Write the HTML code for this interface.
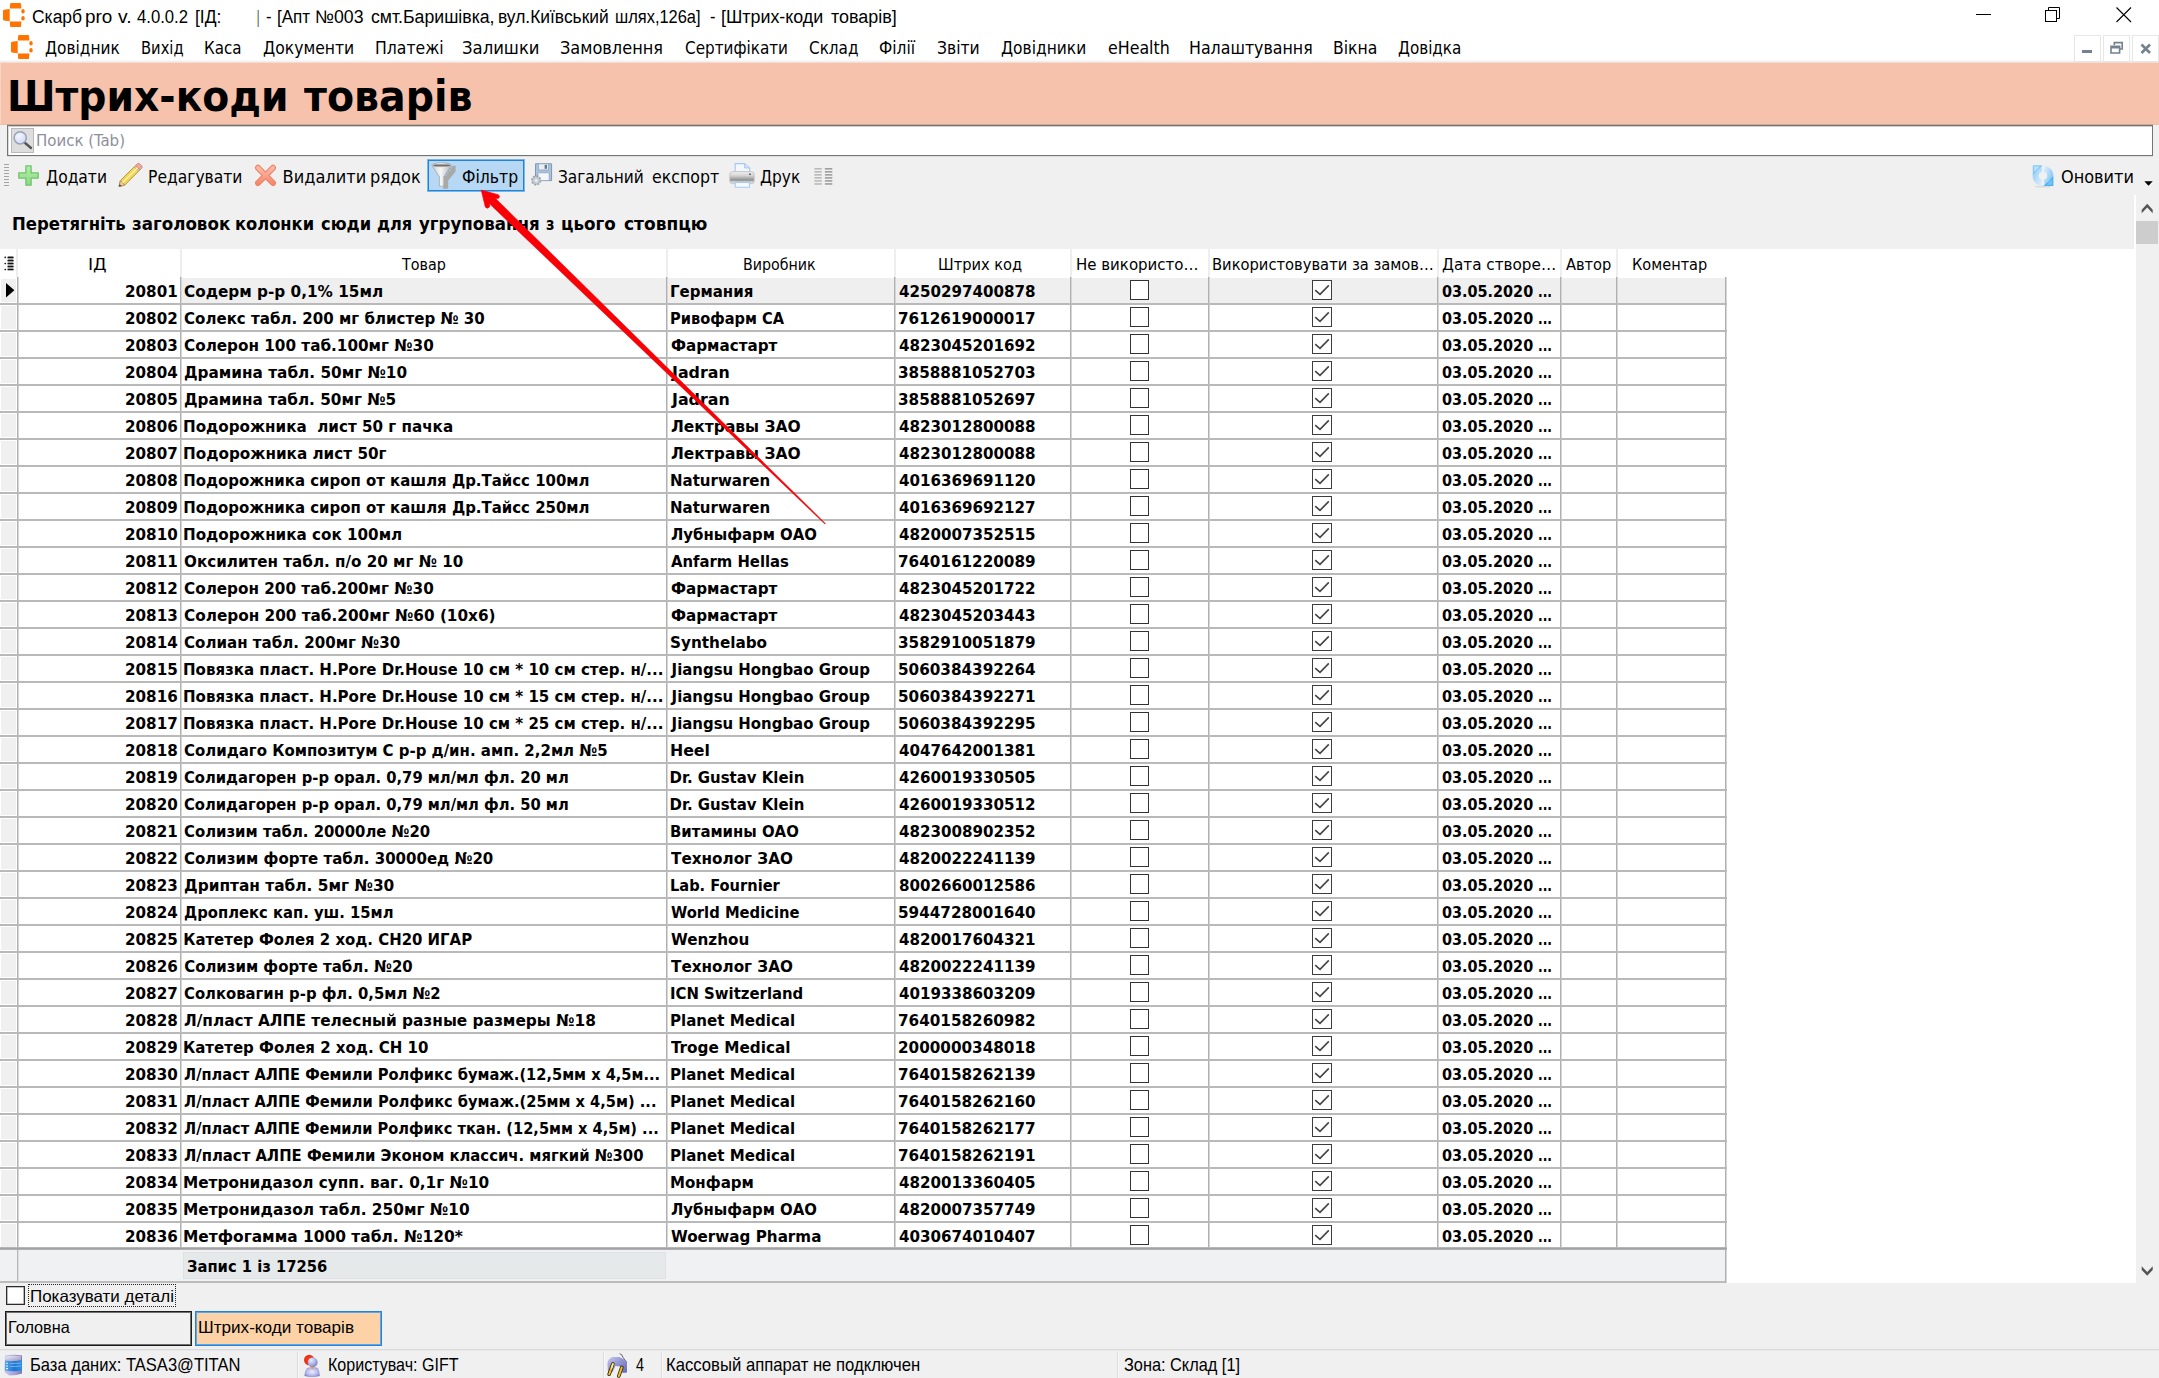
<!DOCTYPE html>
<html lang="uk"><head><meta charset="utf-8"><title>Скарб pro - Штрих-коди товарів</title>
<style>
html,body{margin:0;padding:0;background:#f0f0f0;}
body{width:2159px;height:1378px;position:relative;overflow:hidden;font-family:'DejaVu Sans Condensed','DejaVu Sans','Liberation Sans',sans-serif;}
.b{position:absolute;box-sizing:border-box;}
.t{position:absolute;white-space:pre;transform-origin:0 0;}
.f0{font:normal normal 18px/27px 'Liberation Sans','DejaVu Sans',sans-serif;color:#000;}
.f1{font:normal condensed 18px/27px 'DejaVu Sans Condensed','DejaVu Sans','Liberation Sans',sans-serif;color:#000;}
.f2{font:bold condensed 42px/63px 'DejaVu Sans Condensed','DejaVu Sans','Liberation Sans',sans-serif;color:#000;}
.f3{font:normal condensed 16px/24px 'DejaVu Sans Condensed','DejaVu Sans','Liberation Sans',sans-serif;color:#8e8e9c;}
.f4{font:bold condensed 18.4px/28px 'DejaVu Sans Condensed','DejaVu Sans','Liberation Sans',sans-serif;color:#000;}
.f5{font:normal condensed 16px/24px 'DejaVu Sans Condensed','DejaVu Sans','Liberation Sans',sans-serif;color:#000;}
.f6{font:bold condensed 16.6px/25px 'DejaVu Sans Condensed','DejaVu Sans','Liberation Sans',sans-serif;color:#000;}
.f7{font:normal normal 16.5px/25px 'Liberation Sans','DejaVu Sans',sans-serif;color:#000;}
.f8{font:normal normal 18.4px/28px 'Liberation Sans','DejaVu Sans',sans-serif;color:#000;}
svg{position:absolute;overflow:visible;}
</style></head><body>
<div class="b" style="left:0px;top:0px;width:2159px;height:32px;background:#ffffff;"></div>
<svg style="left:3px;top:3px" width="22" height="24" viewBox="0 0 22 24"><g fill="#ff7300"><path d="M7.2 0.6 Q7.4 0 8.2 0 H17 Q17.8 0 18 0.6 L18.4 5.6 H6.8 Z"/><path d="M6.8 18.4 H18.4 L18 23.4 Q17.8 24 17 24 H8.2 Q7.4 24 7.2 23.4 Z"/><path d="M0.8 6.8 Q0 7.1 0 8 V16.2 Q0 17.1 0.8 17.4 L6.7 18.2 V5.9 Z"/><ellipse cx="20" cy="8.2" rx="1.7" ry="2.3"/><ellipse cx="20" cy="15.3" rx="1.7" ry="2.3"/></g></svg>
<div class="b" style="left:1976px;top:14px;width:15px;height:1px;background:#000;"></div>
<svg style="left:2044px;top:6px" width="18" height="18" viewBox="0 0 18 18"><g fill="none" stroke="#000" stroke-width="1"><rect x="1.5" y="4.5" width="11" height="11"/><path d="M4.5 4.5 V1.5 H15.5 V12.5 H12.5"/></g></svg>
<svg style="left:2115px;top:6px" width="18" height="18" viewBox="0 0 18 18"><g fill="none" stroke="#000" stroke-width="1.1"><path d="M1.5 1.5 L16 16 M16 1.5 L1.5 16"/></g></svg>
<div class="b" style="left:0px;top:32px;width:2159px;height:28px;background:#ffffff;"></div>
<div class="b" style="left:0px;top:60px;width:2159px;height:1px;background:#f8f8f8;"></div>
<div class="b" style="left:0px;top:61px;width:2159px;height:1px;background:#f0f0f0;"></div>
<div class="b" style="left:0px;top:62px;width:2159px;height:1px;background:#f3dcd2;"></div>
<svg style="left:11px;top:34.5px" width="22" height="24" viewBox="0 0 22 24"><g fill="#ff7300"><path d="M7.2 0.6 Q7.4 0 8.2 0 H17 Q17.8 0 18 0.6 L18.4 5.6 H6.8 Z"/><path d="M6.8 18.4 H18.4 L18 23.4 Q17.8 24 17 24 H8.2 Q7.4 24 7.2 23.4 Z"/><path d="M0.8 6.8 Q0 7.1 0 8 V16.2 Q0 17.1 0.8 17.4 L6.7 18.2 V5.9 Z"/><ellipse cx="20" cy="8.2" rx="1.7" ry="2.3"/><ellipse cx="20" cy="15.3" rx="1.7" ry="2.3"/></g></svg>
<div class="b" style="left:2074px;top:35px;width:27px;height:27px;background:#ffffff;border:1px solid #e4e6e8;"></div>
<div class="b" style="left:2103px;top:35px;width:27px;height:27px;background:#ffffff;border:1px solid #e4e6e8;"></div>
<div class="b" style="left:2132px;top:35px;width:27px;height:27px;background:#ffffff;border:1px solid #e4e6e8;"></div>
<div class="b" style="left:2082px;top:50px;width:10px;height:3px;background:#76808e;"></div>
<svg style="left:2110px;top:41px" width="14" height="14" viewBox="0 0 14 14"><g fill="none" stroke="#76808e" stroke-width="1.6"><path d="M4.3 4 V1.6 H12.2 V8 H10"/><path d="M1 5.2 H9.6 V12 H1 Z M1 6.6 H9.6"/></g></svg>
<svg style="left:2140px;top:43px" width="12" height="12" viewBox="0 0 12 12"><g fill="none" stroke="#76808e" stroke-width="2.6"><path d="M1.5 1.5 L10 10 M10 1.5 L1.5 10"/></g></svg>
<div class="b" style="left:0px;top:63px;width:2159px;height:61px;background:#f6c2ab;"></div>
<div class="b" style="left:0px;top:124px;width:2159px;height:1px;background:#e9c0ae;"></div>
<div class="b" style="left:0px;top:63px;width:1px;height:61px;background:#f8d4c4;"></div>
<div class="b" style="left:7px;top:124px;width:2146px;height:1px;background:#cfa998;"></div>
<div class="b" style="left:7px;top:125px;width:2146px;height:31px;background:#ffffff;border:1px solid #747474;"></div>
<div class="b" style="left:8px;top:126px;width:2144px;height:1px;background:#cfcfcf;"></div>
<div class="b" style="left:8px;top:126px;width:1px;height:29px;background:#dcdcdc;"></div>
<div class="b" style="left:7px;top:156px;width:2146px;height:1px;background:#dedede;"></div>
<div class="b" style="left:11px;top:128px;width:23px;height:25px;background:#dddddd;border:1px solid #b9b9b9;"></div>
<svg style="left:11px;top:128px" width="23" height="25" viewBox="0 0 23 25"><defs><radialGradient id="lens" cx="0.4" cy="0.35" r="0.7"><stop offset="0" stop-color="#f4f6ff"/><stop offset="1" stop-color="#cfd8f8"/></radialGradient></defs><path d="M13.5 14.5 L20 20" stroke="#555" stroke-width="2.4" stroke-linecap="round"/><circle cx="9.2" cy="9.8" r="6.1" fill="url(#lens)" stroke="#98a3b5" stroke-width="1.5"/></svg>
<div class="b" style="left:4px;top:164px;width:5px;height:1px;background:#a4a4a4;"></div>
<div class="b" style="left:4px;top:167px;width:5px;height:1px;background:#a4a4a4;"></div>
<div class="b" style="left:4px;top:170px;width:5px;height:1px;background:#a4a4a4;"></div>
<div class="b" style="left:4px;top:173px;width:5px;height:1px;background:#a4a4a4;"></div>
<div class="b" style="left:4px;top:176px;width:5px;height:1px;background:#a4a4a4;"></div>
<div class="b" style="left:4px;top:179px;width:5px;height:1px;background:#a4a4a4;"></div>
<div class="b" style="left:4px;top:182px;width:5px;height:1px;background:#a4a4a4;"></div>
<div class="b" style="left:4px;top:185px;width:5px;height:1px;background:#a4a4a4;"></div>
<svg style="left:18px;top:165px" width="21" height="21" viewBox="0 0 21 21"><defs><linearGradient id="gp" x1="0" y1="0" x2="0" y2="1"><stop offset="0" stop-color="#b2efaa"/><stop offset="1" stop-color="#8cd985"/></linearGradient></defs><path d="M7.9 0.8 H13.1 V7.9 H20.2 V13.1 H13.1 V20.2 H7.9 V13.1 H0.8 V7.9 H7.9 Z" fill="url(#gp)" stroke="#6ec36a" stroke-width="1.3" stroke-linejoin="round"/></svg>
<svg style="left:117px;top:162px" width="27" height="27" viewBox="0 0 27 27"><path d="M2 24.6 L3.4 18.6 L18.6 3.4 L23 7.8 L7.8 23 Z" fill="#f3d656" stroke="#b79a3c" stroke-width="1"/><path d="M18.6 3.4 L20.6 1.6 Q21.6 0.9 22.6 1.8 L24.8 4 Q25.6 5 24.8 5.9 L23 7.8 Z" fill="#f3a7a0" stroke="#c98680" stroke-width="0.9"/><path d="M17.3 4.8 L21.7 9.2" stroke="#b9b9b9" stroke-width="1.4"/><path d="M2 24.6 L3.4 18.6 L7.8 23 Z" fill="#f0c9a0" stroke="#a98659" stroke-width="0.8"/><path d="M2 24.6 L2.6 22 L4.5 24 Z" fill="#444"/><path d="M5.6 20.8 L20.6 5.8" stroke="#fff3a8" stroke-width="1.3"/></svg>
<svg style="left:250px;top:160px" width="32" height="32" viewBox="250 160 32 32"><defs><linearGradient id="rx" x1="0" y1="0" x2="0" y2="1"><stop offset="0" stop-color="#ffb9a6"/><stop offset="1" stop-color="#f58a70"/></linearGradient></defs><path d="M258 167.8 L273 183 M273 167.8 L258 183" stroke="#ee8268" stroke-width="6" stroke-linecap="round"/><path d="M258 167.8 L273 183 M273 167.8 L258 183" stroke="url(#rx)" stroke-width="3.8" stroke-linecap="round"/></svg>
<div class="b" style="left:427px;top:159px;width:98px;height:33px;background:#b6d8f4;border:1px solid #79b6ea;"></div>
<div class="b" style="left:428px;top:160px;width:96px;height:31px;background:#b6d8f4;border:1px solid #1f84da;"></div>
<svg style="left:431px;top:162px" width="27" height="28" viewBox="0 0 27 28"><defs><linearGradient id="fn" x1="0" y1="0" x2="1" y2="0"><stop offset="0" stop-color="#c9cccf"/><stop offset="0.45" stop-color="#f6f6f6"/><stop offset="1" stop-color="#b2b6ba"/></linearGradient><linearGradient id="fe" x1="0" y1="0" x2="0" y2="1"><stop offset="0" stop-color="#d9d9d9"/><stop offset="0.5" stop-color="#6f6f6f"/><stop offset="1" stop-color="#e4e4e4"/></linearGradient></defs><path d="M14 5.5 L24.6 3.4 V9.4 L17.2 18.6 V26.6 L12.4 27 L12.2 23.4 Z" fill="#a9a9a9"/><path d="M0.9 3.6 Q1.2 1 10.6 0.7 Q20 1 20.4 3.6 L12.8 14.6 V23.8 Q10.6 25 8.4 23.8 V14.6 Z" fill="url(#fn)" stroke="#a4a8ac" stroke-width="0.8" stroke-linejoin="round"/><ellipse cx="10.6" cy="3.5" rx="8.6" ry="2" fill="url(#fe)"/><path d="M14.4 14 L21 5" stroke="#9ed0f2" stroke-width="1.2" stroke-dasharray="1.6 1.6" fill="none"/></svg>
<svg style="left:530px;top:163px" width="23" height="24" viewBox="0 0 23 24"><path d="M5.5 0.8 H21.6 V17.6 H5.5 Z" fill="#a9c3dd" stroke="#7f97b2" stroke-width="1"/><rect x="8.3" y="0.8" width="10.2" height="6.2" fill="#e9eef4" stroke="#8ea3bb" stroke-width="0.8"/><rect x="14.6" y="1.8" width="2.4" height="4" fill="#5f7894"/><rect x="8" y="9.8" width="11.2" height="7.8" fill="#f4f6f9" stroke="#93a7bd" stroke-width="0.8"/><circle cx="6.2" cy="17.4" r="4.3" fill="#c3cad2" stroke="#98a2ad" stroke-width="1.6" stroke-dasharray="2 1.3"/><circle cx="6.2" cy="17.4" r="1.5" fill="#eef1f4"/></svg>
<svg style="left:729px;top:163px" width="26" height="25" viewBox="0 0 26 25"><defs><linearGradient id="pr" x1="0" y1="0" x2="0" y2="1"><stop offset="0" stop-color="#f2f2f2"/><stop offset="0.35" stop-color="#d2d2d2"/><stop offset="0.72" stop-color="#8c8c8c"/><stop offset="0.8" stop-color="#c4c4c4"/><stop offset="1" stop-color="#e6e6e6"/></linearGradient></defs><path d="M6.2 0.6 H15.6 L20.6 5 V10 H6.2 Z" fill="#f3f8ff" stroke="#a4c6ee" stroke-width="1.1"/><path d="M15.6 0.6 V5 H20.6" fill="#cfe2f8" stroke="#a4c6ee" stroke-width="0.9"/><path d="M3.6 8.6 H22.4 Q25.2 8.6 25.2 11.4 V18 Q25.2 20.6 22.6 20.6 H3.4 Q0.8 20.6 0.8 18 V11.4 Q0.8 8.6 3.6 8.6 Z" fill="url(#pr)" stroke="#c2c2c2" stroke-width="0.9"/><circle cx="21" cy="11.2" r="0.9" fill="#555"/><path d="M6.2 19.4 H20.4 V24.2 H6.2 Z" fill="#f6faff" stroke="#a9caf0" stroke-width="1.1"/></svg>
<svg style="left:810px;top:160px" width="30" height="30" viewBox="810 160 30 30"><rect x="814.4" y="168.20" width="7.4" height="1.3" fill="#adadad"/><rect x="824.9" y="168.20" width="7.4" height="1.3" fill="#8c8c8c"/><rect x="814.4" y="171.22" width="7.4" height="1.3" fill="#adadad"/><rect x="824.9" y="171.22" width="7.4" height="1.3" fill="#8c8c8c"/><rect x="814.4" y="174.24" width="7.4" height="1.3" fill="#adadad"/><rect x="824.9" y="174.24" width="7.4" height="1.3" fill="#8c8c8c"/><rect x="814.4" y="177.26" width="7.4" height="1.3" fill="#adadad"/><rect x="824.9" y="177.26" width="7.4" height="1.3" fill="#8c8c8c"/><rect x="814.4" y="180.28" width="7.4" height="1.3" fill="#adadad"/><rect x="824.9" y="180.28" width="7.4" height="1.3" fill="#8c8c8c"/><rect x="814.4" y="183.30" width="7.4" height="1.3" fill="#adadad"/><rect x="824.9" y="183.30" width="7.4" height="1.3" fill="#8c8c8c"/></svg>
<svg style="left:2030px;top:162px" width="27" height="27" viewBox="2030 162 27 27"><defs><linearGradient id="rf1" x1="0" y1="0" x2="1" y2="1"><stop offset="0" stop-color="#9dd2f8"/><stop offset="1" stop-color="#dcedfb"/></linearGradient><linearGradient id="rf2" x1="0" y1="0" x2="1" y2="1"><stop offset="0" stop-color="#dcedfb"/><stop offset="1" stop-color="#86c8f6"/></linearGradient></defs><ellipse cx="2043" cy="186.6" rx="8.4" ry="1.1" fill="#dedede"/><path d="M2041.6 168.7 A7.2 7.2 0 0 0 2041.8 182.9" fill="none" stroke="url(#rf1)" stroke-width="6.2"/><path d="M2044.4 182.9 A7.2 7.2 0 0 0 2044.2 168.7" fill="none" stroke="url(#rf2)" stroke-width="6.2"/><path d="M2032.8 165.2 H2042.8 L2040.2 168 Q2037 169 2035.6 172.4 L2032.8 175 Z" fill="#84c9f7"/><path d="M2034.2 166.4 H2039.6 L2034.2 171.8 Z" fill="#bfe3fc"/><path d="M2053.4 186 H2043.4 L2046 183.2 Q2049.2 182.2 2050.6 178.8 L2053.4 176.2 Z" fill="#4fb5f2"/><path d="M2052 184.8 H2046.8 L2052 179.6 Z" fill="#74c6f7"/></svg>
<svg style="left:2144px;top:181px" width="9" height="5" viewBox="0 0 9 5"><path d="M0.3 0.3 H8.7 L4.5 4.8 Z" fill="#000"/></svg>
<div class="b" style="left:0px;top:249px;width:2135px;height:1034px;background:#ffffff;"></div>
<div class="b" style="left:2134px;top:195px;width:2px;height:1088px;background:#ffffff;"></div>
<div class="b" style="left:2136px;top:195px;width:23px;height:1088px;background:#f0f0f0;"></div>
<div class="b" style="left:2136px;top:221px;width:22px;height:23px;background:#cdcdcd;"></div>
<svg style="left:0;top:0" width="2159" height="1378" viewBox="0 0 2159 1378"><path d="M2141.7 209.7 L2147.2 203.8 L2152.7 209.7 V213.3 L2147.2 207.6 L2141.7 213.3 Z" fill="#555"/><path d="M2141.7 1269.9 L2147.2 1275.8 L2152.7 1269.9 V1266.3 L2147.2 1272 L2141.7 1266.3 Z" fill="#555"/></svg>
<div class="b" style="left:16px;top:249px;width:2px;height:28px;background:#eeeeee;"></div>
<div class="b" style="left:180px;top:249px;width:2px;height:28px;background:#eeeeee;"></div>
<div class="b" style="left:666px;top:249px;width:2px;height:28px;background:#eeeeee;"></div>
<div class="b" style="left:894px;top:249px;width:2px;height:28px;background:#eeeeee;"></div>
<div class="b" style="left:1070px;top:249px;width:2px;height:28px;background:#eeeeee;"></div>
<div class="b" style="left:1208px;top:249px;width:2px;height:28px;background:#eeeeee;"></div>
<div class="b" style="left:1437px;top:249px;width:2px;height:28px;background:#eeeeee;"></div>
<div class="b" style="left:1560px;top:249px;width:2px;height:28px;background:#eeeeee;"></div>
<div class="b" style="left:1616px;top:249px;width:2px;height:28px;background:#eeeeee;"></div>
<svg style="left:0;top:0" width="20" height="280" viewBox="0 0 20 280"><rect x="7.6" y="257" width="5.9" height="13.4" fill="#cecece"/><rect x="7.5" y="256.60" width="6.1" height="1.6" rx="0.6" fill="#151515"/><rect x="4.4" y="256.60" width="1.7" height="1.6" rx="0.6" fill="#222"/><rect x="7.5" y="259.63" width="6.1" height="1.6" rx="0.6" fill="#151515"/><rect x="7.5" y="262.66" width="6.1" height="1.6" rx="0.6" fill="#151515"/><rect x="4.4" y="262.66" width="1.7" height="1.6" rx="0.6" fill="#222"/><rect x="7.5" y="265.69" width="6.1" height="1.6" rx="0.6" fill="#151515"/><rect x="7.5" y="268.72" width="6.1" height="1.6" rx="0.6" fill="#151515"/><rect x="4.4" y="268.72" width="1.7" height="1.6" rx="0.6" fill="#222"/></svg>
<div class="b" style="left:182px;top:278px;width:1543px;height:25px;background:#efefef;"></div>
<div class="b" style="left:1px;top:279px;width:15px;height:23px;background:#f0f0f0;"></div>
<div class="b" style="left:1px;top:306px;width:15px;height:23px;background:#f0f0f0;"></div>
<div class="b" style="left:1px;top:333px;width:15px;height:23px;background:#f0f0f0;"></div>
<div class="b" style="left:1px;top:360px;width:15px;height:23px;background:#f0f0f0;"></div>
<div class="b" style="left:1px;top:387px;width:15px;height:23px;background:#f0f0f0;"></div>
<div class="b" style="left:1px;top:414px;width:15px;height:23px;background:#f0f0f0;"></div>
<div class="b" style="left:1px;top:441px;width:15px;height:23px;background:#f0f0f0;"></div>
<div class="b" style="left:1px;top:468px;width:15px;height:23px;background:#f0f0f0;"></div>
<div class="b" style="left:1px;top:495px;width:15px;height:23px;background:#f0f0f0;"></div>
<div class="b" style="left:1px;top:522px;width:15px;height:23px;background:#f0f0f0;"></div>
<div class="b" style="left:1px;top:549px;width:15px;height:23px;background:#f0f0f0;"></div>
<div class="b" style="left:1px;top:576px;width:15px;height:23px;background:#f0f0f0;"></div>
<div class="b" style="left:1px;top:603px;width:15px;height:23px;background:#f0f0f0;"></div>
<div class="b" style="left:1px;top:630px;width:15px;height:23px;background:#f0f0f0;"></div>
<div class="b" style="left:1px;top:657px;width:15px;height:23px;background:#f0f0f0;"></div>
<div class="b" style="left:1px;top:684px;width:15px;height:23px;background:#f0f0f0;"></div>
<div class="b" style="left:1px;top:711px;width:15px;height:23px;background:#f0f0f0;"></div>
<div class="b" style="left:1px;top:738px;width:15px;height:23px;background:#f0f0f0;"></div>
<div class="b" style="left:1px;top:765px;width:15px;height:23px;background:#f0f0f0;"></div>
<div class="b" style="left:1px;top:792px;width:15px;height:23px;background:#f0f0f0;"></div>
<div class="b" style="left:1px;top:819px;width:15px;height:23px;background:#f0f0f0;"></div>
<div class="b" style="left:1px;top:846px;width:15px;height:23px;background:#f0f0f0;"></div>
<div class="b" style="left:1px;top:873px;width:15px;height:23px;background:#f0f0f0;"></div>
<div class="b" style="left:1px;top:900px;width:15px;height:23px;background:#f0f0f0;"></div>
<div class="b" style="left:1px;top:927px;width:15px;height:23px;background:#f0f0f0;"></div>
<div class="b" style="left:1px;top:954px;width:15px;height:23px;background:#f0f0f0;"></div>
<div class="b" style="left:1px;top:981px;width:15px;height:23px;background:#f0f0f0;"></div>
<div class="b" style="left:1px;top:1008px;width:15px;height:23px;background:#f0f0f0;"></div>
<div class="b" style="left:1px;top:1035px;width:15px;height:23px;background:#f0f0f0;"></div>
<div class="b" style="left:1px;top:1062px;width:15px;height:23px;background:#f0f0f0;"></div>
<div class="b" style="left:1px;top:1089px;width:15px;height:23px;background:#f0f0f0;"></div>
<div class="b" style="left:1px;top:1116px;width:15px;height:23px;background:#f0f0f0;"></div>
<div class="b" style="left:1px;top:1143px;width:15px;height:23px;background:#f0f0f0;"></div>
<div class="b" style="left:1px;top:1170px;width:15px;height:23px;background:#f0f0f0;"></div>
<div class="b" style="left:1px;top:1197px;width:15px;height:23px;background:#f0f0f0;"></div>
<div class="b" style="left:1px;top:1224px;width:15px;height:23px;background:#f0f0f0;"></div>
<div class="b" style="left:17px;top:277px;width:1px;height:971px;background:#b0b0b0;"></div>
<div class="b" style="left:18px;top:277px;width:1px;height:971px;background:#d6d6d6;"></div>
<div class="b" style="left:180px;top:277px;width:1px;height:971px;background:#b0b0b0;"></div>
<div class="b" style="left:181px;top:277px;width:1px;height:971px;background:#d6d6d6;"></div>
<div class="b" style="left:666px;top:277px;width:1px;height:971px;background:#b0b0b0;"></div>
<div class="b" style="left:667px;top:277px;width:1px;height:971px;background:#d6d6d6;"></div>
<div class="b" style="left:894px;top:277px;width:1px;height:971px;background:#b0b0b0;"></div>
<div class="b" style="left:895px;top:277px;width:1px;height:971px;background:#d6d6d6;"></div>
<div class="b" style="left:1070px;top:277px;width:1px;height:971px;background:#b0b0b0;"></div>
<div class="b" style="left:1071px;top:277px;width:1px;height:971px;background:#d6d6d6;"></div>
<div class="b" style="left:1208px;top:277px;width:1px;height:971px;background:#b0b0b0;"></div>
<div class="b" style="left:1209px;top:277px;width:1px;height:971px;background:#d6d6d6;"></div>
<div class="b" style="left:1437px;top:277px;width:1px;height:971px;background:#b0b0b0;"></div>
<div class="b" style="left:1438px;top:277px;width:1px;height:971px;background:#d6d6d6;"></div>
<div class="b" style="left:1560px;top:277px;width:1px;height:971px;background:#b0b0b0;"></div>
<div class="b" style="left:1561px;top:277px;width:1px;height:971px;background:#d6d6d6;"></div>
<div class="b" style="left:1616px;top:277px;width:1px;height:971px;background:#b0b0b0;"></div>
<div class="b" style="left:1617px;top:277px;width:1px;height:971px;background:#d6d6d6;"></div>
<div class="b" style="left:1725px;top:277px;width:1px;height:971px;background:#b0b0b0;"></div>
<div class="b" style="left:1726px;top:277px;width:1px;height:971px;background:#d6d6d6;"></div>
<div class="b" style="left:0px;top:303px;width:1727px;height:2px;background:#b9b9b9;"></div>
<div class="b" style="left:0px;top:330px;width:1727px;height:2px;background:#b9b9b9;"></div>
<div class="b" style="left:0px;top:357px;width:1727px;height:2px;background:#b9b9b9;"></div>
<div class="b" style="left:0px;top:384px;width:1727px;height:2px;background:#b9b9b9;"></div>
<div class="b" style="left:0px;top:411px;width:1727px;height:2px;background:#b9b9b9;"></div>
<div class="b" style="left:0px;top:438px;width:1727px;height:2px;background:#b9b9b9;"></div>
<div class="b" style="left:0px;top:465px;width:1727px;height:2px;background:#b9b9b9;"></div>
<div class="b" style="left:0px;top:492px;width:1727px;height:2px;background:#b9b9b9;"></div>
<div class="b" style="left:0px;top:519px;width:1727px;height:2px;background:#b9b9b9;"></div>
<div class="b" style="left:0px;top:546px;width:1727px;height:2px;background:#b9b9b9;"></div>
<div class="b" style="left:0px;top:573px;width:1727px;height:2px;background:#b9b9b9;"></div>
<div class="b" style="left:0px;top:600px;width:1727px;height:2px;background:#b9b9b9;"></div>
<div class="b" style="left:0px;top:627px;width:1727px;height:2px;background:#b9b9b9;"></div>
<div class="b" style="left:0px;top:654px;width:1727px;height:2px;background:#b9b9b9;"></div>
<div class="b" style="left:0px;top:681px;width:1727px;height:2px;background:#b9b9b9;"></div>
<div class="b" style="left:0px;top:708px;width:1727px;height:2px;background:#b9b9b9;"></div>
<div class="b" style="left:0px;top:735px;width:1727px;height:2px;background:#b9b9b9;"></div>
<div class="b" style="left:0px;top:762px;width:1727px;height:2px;background:#b9b9b9;"></div>
<div class="b" style="left:0px;top:789px;width:1727px;height:2px;background:#b9b9b9;"></div>
<div class="b" style="left:0px;top:816px;width:1727px;height:2px;background:#b9b9b9;"></div>
<div class="b" style="left:0px;top:843px;width:1727px;height:2px;background:#b9b9b9;"></div>
<div class="b" style="left:0px;top:870px;width:1727px;height:2px;background:#b9b9b9;"></div>
<div class="b" style="left:0px;top:897px;width:1727px;height:2px;background:#b9b9b9;"></div>
<div class="b" style="left:0px;top:924px;width:1727px;height:2px;background:#b9b9b9;"></div>
<div class="b" style="left:0px;top:951px;width:1727px;height:2px;background:#b9b9b9;"></div>
<div class="b" style="left:0px;top:978px;width:1727px;height:2px;background:#b9b9b9;"></div>
<div class="b" style="left:0px;top:1005px;width:1727px;height:2px;background:#b9b9b9;"></div>
<div class="b" style="left:0px;top:1032px;width:1727px;height:2px;background:#b9b9b9;"></div>
<div class="b" style="left:0px;top:1059px;width:1727px;height:2px;background:#b9b9b9;"></div>
<div class="b" style="left:0px;top:1086px;width:1727px;height:2px;background:#b9b9b9;"></div>
<div class="b" style="left:0px;top:1113px;width:1727px;height:2px;background:#b9b9b9;"></div>
<div class="b" style="left:0px;top:1140px;width:1727px;height:2px;background:#b9b9b9;"></div>
<div class="b" style="left:0px;top:1167px;width:1727px;height:2px;background:#b9b9b9;"></div>
<div class="b" style="left:0px;top:1194px;width:1727px;height:2px;background:#b9b9b9;"></div>
<div class="b" style="left:0px;top:1221px;width:1727px;height:2px;background:#b9b9b9;"></div>
<div class="b" style="left:0px;top:1247px;width:1727px;height:1px;background:#b6b6b6;"></div>
<div class="b" style="left:0px;top:1248px;width:1727px;height:1px;background:#a2a2a2;"></div>
<div class="b" style="left:0px;top:1249px;width:1727px;height:1px;background:#b0b0b0;"></div>
<svg style="left:6px;top:283px" width="9" height="15" viewBox="0 0 9 15"><path d="M0 0 L8.4 7.3 L0 14.6 Z" fill="#000"/></svg>
<div class="b" style="left:1130px;top:280px;width:19px;height:20px;background:#ffffff;border:1.4px solid #333;"></div>
<div class="b" style="left:1312px;top:280px;width:20px;height:20px;background:#ffffff;border:1.4px solid #3d3d3d;"></div>
<svg style="left:1312px;top:280px" width="20" height="20" viewBox="0 0 20 20"><path d="M3.2 10.2 L8 14.4 L16.8 5.4" fill="none" stroke="#444" stroke-width="1.6"/></svg>
<div class="b" style="left:1130px;top:307px;width:19px;height:20px;background:#ffffff;border:1.4px solid #333;"></div>
<div class="b" style="left:1312px;top:307px;width:20px;height:20px;background:#ffffff;border:1.4px solid #3d3d3d;"></div>
<svg style="left:1312px;top:307px" width="20" height="20" viewBox="0 0 20 20"><path d="M3.2 10.2 L8 14.4 L16.8 5.4" fill="none" stroke="#444" stroke-width="1.6"/></svg>
<div class="b" style="left:1130px;top:334px;width:19px;height:20px;background:#ffffff;border:1.4px solid #333;"></div>
<div class="b" style="left:1312px;top:334px;width:20px;height:20px;background:#ffffff;border:1.4px solid #3d3d3d;"></div>
<svg style="left:1312px;top:334px" width="20" height="20" viewBox="0 0 20 20"><path d="M3.2 10.2 L8 14.4 L16.8 5.4" fill="none" stroke="#444" stroke-width="1.6"/></svg>
<div class="b" style="left:1130px;top:361px;width:19px;height:20px;background:#ffffff;border:1.4px solid #333;"></div>
<div class="b" style="left:1312px;top:361px;width:20px;height:20px;background:#ffffff;border:1.4px solid #3d3d3d;"></div>
<svg style="left:1312px;top:361px" width="20" height="20" viewBox="0 0 20 20"><path d="M3.2 10.2 L8 14.4 L16.8 5.4" fill="none" stroke="#444" stroke-width="1.6"/></svg>
<div class="b" style="left:1130px;top:388px;width:19px;height:20px;background:#ffffff;border:1.4px solid #333;"></div>
<div class="b" style="left:1312px;top:388px;width:20px;height:20px;background:#ffffff;border:1.4px solid #3d3d3d;"></div>
<svg style="left:1312px;top:388px" width="20" height="20" viewBox="0 0 20 20"><path d="M3.2 10.2 L8 14.4 L16.8 5.4" fill="none" stroke="#444" stroke-width="1.6"/></svg>
<div class="b" style="left:1130px;top:415px;width:19px;height:20px;background:#ffffff;border:1.4px solid #333;"></div>
<div class="b" style="left:1312px;top:415px;width:20px;height:20px;background:#ffffff;border:1.4px solid #3d3d3d;"></div>
<svg style="left:1312px;top:415px" width="20" height="20" viewBox="0 0 20 20"><path d="M3.2 10.2 L8 14.4 L16.8 5.4" fill="none" stroke="#444" stroke-width="1.6"/></svg>
<div class="b" style="left:1130px;top:442px;width:19px;height:20px;background:#ffffff;border:1.4px solid #333;"></div>
<div class="b" style="left:1312px;top:442px;width:20px;height:20px;background:#ffffff;border:1.4px solid #3d3d3d;"></div>
<svg style="left:1312px;top:442px" width="20" height="20" viewBox="0 0 20 20"><path d="M3.2 10.2 L8 14.4 L16.8 5.4" fill="none" stroke="#444" stroke-width="1.6"/></svg>
<div class="b" style="left:1130px;top:469px;width:19px;height:20px;background:#ffffff;border:1.4px solid #333;"></div>
<div class="b" style="left:1312px;top:469px;width:20px;height:20px;background:#ffffff;border:1.4px solid #3d3d3d;"></div>
<svg style="left:1312px;top:469px" width="20" height="20" viewBox="0 0 20 20"><path d="M3.2 10.2 L8 14.4 L16.8 5.4" fill="none" stroke="#444" stroke-width="1.6"/></svg>
<div class="b" style="left:1130px;top:496px;width:19px;height:20px;background:#ffffff;border:1.4px solid #333;"></div>
<div class="b" style="left:1312px;top:496px;width:20px;height:20px;background:#ffffff;border:1.4px solid #3d3d3d;"></div>
<svg style="left:1312px;top:496px" width="20" height="20" viewBox="0 0 20 20"><path d="M3.2 10.2 L8 14.4 L16.8 5.4" fill="none" stroke="#444" stroke-width="1.6"/></svg>
<div class="b" style="left:1130px;top:523px;width:19px;height:20px;background:#ffffff;border:1.4px solid #333;"></div>
<div class="b" style="left:1312px;top:523px;width:20px;height:20px;background:#ffffff;border:1.4px solid #3d3d3d;"></div>
<svg style="left:1312px;top:523px" width="20" height="20" viewBox="0 0 20 20"><path d="M3.2 10.2 L8 14.4 L16.8 5.4" fill="none" stroke="#444" stroke-width="1.6"/></svg>
<div class="b" style="left:1130px;top:550px;width:19px;height:20px;background:#ffffff;border:1.4px solid #333;"></div>
<div class="b" style="left:1312px;top:550px;width:20px;height:20px;background:#ffffff;border:1.4px solid #3d3d3d;"></div>
<svg style="left:1312px;top:550px" width="20" height="20" viewBox="0 0 20 20"><path d="M3.2 10.2 L8 14.4 L16.8 5.4" fill="none" stroke="#444" stroke-width="1.6"/></svg>
<div class="b" style="left:1130px;top:577px;width:19px;height:20px;background:#ffffff;border:1.4px solid #333;"></div>
<div class="b" style="left:1312px;top:577px;width:20px;height:20px;background:#ffffff;border:1.4px solid #3d3d3d;"></div>
<svg style="left:1312px;top:577px" width="20" height="20" viewBox="0 0 20 20"><path d="M3.2 10.2 L8 14.4 L16.8 5.4" fill="none" stroke="#444" stroke-width="1.6"/></svg>
<div class="b" style="left:1130px;top:604px;width:19px;height:20px;background:#ffffff;border:1.4px solid #333;"></div>
<div class="b" style="left:1312px;top:604px;width:20px;height:20px;background:#ffffff;border:1.4px solid #3d3d3d;"></div>
<svg style="left:1312px;top:604px" width="20" height="20" viewBox="0 0 20 20"><path d="M3.2 10.2 L8 14.4 L16.8 5.4" fill="none" stroke="#444" stroke-width="1.6"/></svg>
<div class="b" style="left:1130px;top:631px;width:19px;height:20px;background:#ffffff;border:1.4px solid #333;"></div>
<div class="b" style="left:1312px;top:631px;width:20px;height:20px;background:#ffffff;border:1.4px solid #3d3d3d;"></div>
<svg style="left:1312px;top:631px" width="20" height="20" viewBox="0 0 20 20"><path d="M3.2 10.2 L8 14.4 L16.8 5.4" fill="none" stroke="#444" stroke-width="1.6"/></svg>
<div class="b" style="left:1130px;top:658px;width:19px;height:20px;background:#ffffff;border:1.4px solid #333;"></div>
<div class="b" style="left:1312px;top:658px;width:20px;height:20px;background:#ffffff;border:1.4px solid #3d3d3d;"></div>
<svg style="left:1312px;top:658px" width="20" height="20" viewBox="0 0 20 20"><path d="M3.2 10.2 L8 14.4 L16.8 5.4" fill="none" stroke="#444" stroke-width="1.6"/></svg>
<div class="b" style="left:1130px;top:685px;width:19px;height:20px;background:#ffffff;border:1.4px solid #333;"></div>
<div class="b" style="left:1312px;top:685px;width:20px;height:20px;background:#ffffff;border:1.4px solid #3d3d3d;"></div>
<svg style="left:1312px;top:685px" width="20" height="20" viewBox="0 0 20 20"><path d="M3.2 10.2 L8 14.4 L16.8 5.4" fill="none" stroke="#444" stroke-width="1.6"/></svg>
<div class="b" style="left:1130px;top:712px;width:19px;height:20px;background:#ffffff;border:1.4px solid #333;"></div>
<div class="b" style="left:1312px;top:712px;width:20px;height:20px;background:#ffffff;border:1.4px solid #3d3d3d;"></div>
<svg style="left:1312px;top:712px" width="20" height="20" viewBox="0 0 20 20"><path d="M3.2 10.2 L8 14.4 L16.8 5.4" fill="none" stroke="#444" stroke-width="1.6"/></svg>
<div class="b" style="left:1130px;top:739px;width:19px;height:20px;background:#ffffff;border:1.4px solid #333;"></div>
<div class="b" style="left:1312px;top:739px;width:20px;height:20px;background:#ffffff;border:1.4px solid #3d3d3d;"></div>
<svg style="left:1312px;top:739px" width="20" height="20" viewBox="0 0 20 20"><path d="M3.2 10.2 L8 14.4 L16.8 5.4" fill="none" stroke="#444" stroke-width="1.6"/></svg>
<div class="b" style="left:1130px;top:766px;width:19px;height:20px;background:#ffffff;border:1.4px solid #333;"></div>
<div class="b" style="left:1312px;top:766px;width:20px;height:20px;background:#ffffff;border:1.4px solid #3d3d3d;"></div>
<svg style="left:1312px;top:766px" width="20" height="20" viewBox="0 0 20 20"><path d="M3.2 10.2 L8 14.4 L16.8 5.4" fill="none" stroke="#444" stroke-width="1.6"/></svg>
<div class="b" style="left:1130px;top:793px;width:19px;height:20px;background:#ffffff;border:1.4px solid #333;"></div>
<div class="b" style="left:1312px;top:793px;width:20px;height:20px;background:#ffffff;border:1.4px solid #3d3d3d;"></div>
<svg style="left:1312px;top:793px" width="20" height="20" viewBox="0 0 20 20"><path d="M3.2 10.2 L8 14.4 L16.8 5.4" fill="none" stroke="#444" stroke-width="1.6"/></svg>
<div class="b" style="left:1130px;top:820px;width:19px;height:20px;background:#ffffff;border:1.4px solid #333;"></div>
<div class="b" style="left:1312px;top:820px;width:20px;height:20px;background:#ffffff;border:1.4px solid #3d3d3d;"></div>
<svg style="left:1312px;top:820px" width="20" height="20" viewBox="0 0 20 20"><path d="M3.2 10.2 L8 14.4 L16.8 5.4" fill="none" stroke="#444" stroke-width="1.6"/></svg>
<div class="b" style="left:1130px;top:847px;width:19px;height:20px;background:#ffffff;border:1.4px solid #333;"></div>
<div class="b" style="left:1312px;top:847px;width:20px;height:20px;background:#ffffff;border:1.4px solid #3d3d3d;"></div>
<svg style="left:1312px;top:847px" width="20" height="20" viewBox="0 0 20 20"><path d="M3.2 10.2 L8 14.4 L16.8 5.4" fill="none" stroke="#444" stroke-width="1.6"/></svg>
<div class="b" style="left:1130px;top:874px;width:19px;height:20px;background:#ffffff;border:1.4px solid #333;"></div>
<div class="b" style="left:1312px;top:874px;width:20px;height:20px;background:#ffffff;border:1.4px solid #3d3d3d;"></div>
<svg style="left:1312px;top:874px" width="20" height="20" viewBox="0 0 20 20"><path d="M3.2 10.2 L8 14.4 L16.8 5.4" fill="none" stroke="#444" stroke-width="1.6"/></svg>
<div class="b" style="left:1130px;top:901px;width:19px;height:20px;background:#ffffff;border:1.4px solid #333;"></div>
<div class="b" style="left:1312px;top:901px;width:20px;height:20px;background:#ffffff;border:1.4px solid #3d3d3d;"></div>
<svg style="left:1312px;top:901px" width="20" height="20" viewBox="0 0 20 20"><path d="M3.2 10.2 L8 14.4 L16.8 5.4" fill="none" stroke="#444" stroke-width="1.6"/></svg>
<div class="b" style="left:1130px;top:928px;width:19px;height:20px;background:#ffffff;border:1.4px solid #333;"></div>
<div class="b" style="left:1312px;top:928px;width:20px;height:20px;background:#ffffff;border:1.4px solid #3d3d3d;"></div>
<svg style="left:1312px;top:928px" width="20" height="20" viewBox="0 0 20 20"><path d="M3.2 10.2 L8 14.4 L16.8 5.4" fill="none" stroke="#444" stroke-width="1.6"/></svg>
<div class="b" style="left:1130px;top:955px;width:19px;height:20px;background:#ffffff;border:1.4px solid #333;"></div>
<div class="b" style="left:1312px;top:955px;width:20px;height:20px;background:#ffffff;border:1.4px solid #3d3d3d;"></div>
<svg style="left:1312px;top:955px" width="20" height="20" viewBox="0 0 20 20"><path d="M3.2 10.2 L8 14.4 L16.8 5.4" fill="none" stroke="#444" stroke-width="1.6"/></svg>
<div class="b" style="left:1130px;top:982px;width:19px;height:20px;background:#ffffff;border:1.4px solid #333;"></div>
<div class="b" style="left:1312px;top:982px;width:20px;height:20px;background:#ffffff;border:1.4px solid #3d3d3d;"></div>
<svg style="left:1312px;top:982px" width="20" height="20" viewBox="0 0 20 20"><path d="M3.2 10.2 L8 14.4 L16.8 5.4" fill="none" stroke="#444" stroke-width="1.6"/></svg>
<div class="b" style="left:1130px;top:1009px;width:19px;height:20px;background:#ffffff;border:1.4px solid #333;"></div>
<div class="b" style="left:1312px;top:1009px;width:20px;height:20px;background:#ffffff;border:1.4px solid #3d3d3d;"></div>
<svg style="left:1312px;top:1009px" width="20" height="20" viewBox="0 0 20 20"><path d="M3.2 10.2 L8 14.4 L16.8 5.4" fill="none" stroke="#444" stroke-width="1.6"/></svg>
<div class="b" style="left:1130px;top:1036px;width:19px;height:20px;background:#ffffff;border:1.4px solid #333;"></div>
<div class="b" style="left:1312px;top:1036px;width:20px;height:20px;background:#ffffff;border:1.4px solid #3d3d3d;"></div>
<svg style="left:1312px;top:1036px" width="20" height="20" viewBox="0 0 20 20"><path d="M3.2 10.2 L8 14.4 L16.8 5.4" fill="none" stroke="#444" stroke-width="1.6"/></svg>
<div class="b" style="left:1130px;top:1063px;width:19px;height:20px;background:#ffffff;border:1.4px solid #333;"></div>
<div class="b" style="left:1312px;top:1063px;width:20px;height:20px;background:#ffffff;border:1.4px solid #3d3d3d;"></div>
<svg style="left:1312px;top:1063px" width="20" height="20" viewBox="0 0 20 20"><path d="M3.2 10.2 L8 14.4 L16.8 5.4" fill="none" stroke="#444" stroke-width="1.6"/></svg>
<div class="b" style="left:1130px;top:1090px;width:19px;height:20px;background:#ffffff;border:1.4px solid #333;"></div>
<div class="b" style="left:1312px;top:1090px;width:20px;height:20px;background:#ffffff;border:1.4px solid #3d3d3d;"></div>
<svg style="left:1312px;top:1090px" width="20" height="20" viewBox="0 0 20 20"><path d="M3.2 10.2 L8 14.4 L16.8 5.4" fill="none" stroke="#444" stroke-width="1.6"/></svg>
<div class="b" style="left:1130px;top:1117px;width:19px;height:20px;background:#ffffff;border:1.4px solid #333;"></div>
<div class="b" style="left:1312px;top:1117px;width:20px;height:20px;background:#ffffff;border:1.4px solid #3d3d3d;"></div>
<svg style="left:1312px;top:1117px" width="20" height="20" viewBox="0 0 20 20"><path d="M3.2 10.2 L8 14.4 L16.8 5.4" fill="none" stroke="#444" stroke-width="1.6"/></svg>
<div class="b" style="left:1130px;top:1144px;width:19px;height:20px;background:#ffffff;border:1.4px solid #333;"></div>
<div class="b" style="left:1312px;top:1144px;width:20px;height:20px;background:#ffffff;border:1.4px solid #3d3d3d;"></div>
<svg style="left:1312px;top:1144px" width="20" height="20" viewBox="0 0 20 20"><path d="M3.2 10.2 L8 14.4 L16.8 5.4" fill="none" stroke="#444" stroke-width="1.6"/></svg>
<div class="b" style="left:1130px;top:1171px;width:19px;height:20px;background:#ffffff;border:1.4px solid #333;"></div>
<div class="b" style="left:1312px;top:1171px;width:20px;height:20px;background:#ffffff;border:1.4px solid #3d3d3d;"></div>
<svg style="left:1312px;top:1171px" width="20" height="20" viewBox="0 0 20 20"><path d="M3.2 10.2 L8 14.4 L16.8 5.4" fill="none" stroke="#444" stroke-width="1.6"/></svg>
<div class="b" style="left:1130px;top:1198px;width:19px;height:20px;background:#ffffff;border:1.4px solid #333;"></div>
<div class="b" style="left:1312px;top:1198px;width:20px;height:20px;background:#ffffff;border:1.4px solid #3d3d3d;"></div>
<svg style="left:1312px;top:1198px" width="20" height="20" viewBox="0 0 20 20"><path d="M3.2 10.2 L8 14.4 L16.8 5.4" fill="none" stroke="#444" stroke-width="1.6"/></svg>
<div class="b" style="left:1130px;top:1225px;width:19px;height:20px;background:#ffffff;border:1.4px solid #333;"></div>
<div class="b" style="left:1312px;top:1225px;width:20px;height:20px;background:#ffffff;border:1.4px solid #3d3d3d;"></div>
<svg style="left:1312px;top:1225px" width="20" height="20" viewBox="0 0 20 20"><path d="M3.2 10.2 L8 14.4 L16.8 5.4" fill="none" stroke="#444" stroke-width="1.6"/></svg>
<div class="b" style="left:0px;top:1250px;width:1726px;height:32px;background:#f0f1f3;"></div>
<div class="b" style="left:0px;top:1281px;width:1727px;height:2px;background:#bcbcbc;"></div>
<div class="b" style="left:17px;top:1250px;width:1px;height:32px;background:#b9b9b9;"></div>
<div class="b" style="left:18px;top:1250px;width:1px;height:32px;background:#dcdcdc;"></div>
<div class="b" style="left:1725px;top:1250px;width:1px;height:33px;background:#b0b0b0;"></div>
<div class="b" style="left:1726px;top:1250px;width:1px;height:33px;background:#d6d6d6;"></div>
<div class="b" style="left:183px;top:1252px;width:483px;height:27px;background:#e6e9ea;border:1px solid #dfe2e4;"></div>
<div class="b" style="left:6px;top:1286px;width:19px;height:19px;background:#ffffff;border:1px solid #2c2c2c;box-shadow:inset 0 0 0 0.6px #8a8a8a;"></div>
<div class="b" style="left:28px;top:1284px;width:148px;height:23px;border:1px dotted #222;"></div>
<div class="b" style="left:5px;top:1311px;width:187px;height:35px;background:#f0f0f0;border:1px solid #1c1c1c;box-shadow:inset 0 0 0 1px #6e6e6e;"></div>
<div class="b" style="left:195px;top:1311px;width:187px;height:35px;background:#fdd2a7;border:1px solid #2482d8;box-shadow:inset 0 0 0 1px #5fa6e6;"></div>
<div class="b" style="left:0px;top:1349px;width:2159px;height:1px;background:#dadada;"></div>
<div class="b" style="left:0px;top:1350px;width:2159px;height:1px;background:#e8e8e8;"></div>
<div class="b" style="left:297px;top:1352px;width:1px;height:26px;background:#dcdcdc;"></div>
<div class="b" style="left:298px;top:1352px;width:1px;height:26px;background:#f8f8f8;"></div>
<div class="b" style="left:603px;top:1352px;width:1px;height:26px;background:#dcdcdc;"></div>
<div class="b" style="left:604px;top:1352px;width:1px;height:26px;background:#f8f8f8;"></div>
<div class="b" style="left:661px;top:1352px;width:1px;height:26px;background:#dcdcdc;"></div>
<div class="b" style="left:662px;top:1352px;width:1px;height:26px;background:#f8f8f8;"></div>
<div class="b" style="left:1117px;top:1352px;width:1px;height:26px;background:#dcdcdc;"></div>
<div class="b" style="left:1118px;top:1352px;width:1px;height:26px;background:#f8f8f8;"></div>
<svg style="left:4px;top:1354px" width="19" height="23" viewBox="0 0 19 23"><defs><linearGradient id="db1" x1="0" y1="0" x2="1" y2="0"><stop offset="0" stop-color="#c9c4ee"/><stop offset="0.6" stop-color="#a79fd6"/><stop offset="1" stop-color="#7f76b4"/></linearGradient><linearGradient id="db2" x1="0" y1="0" x2="1" y2="0"><stop offset="0" stop-color="#5aa4ea"/><stop offset="0.55" stop-color="#1a78d6"/><stop offset="1" stop-color="#2f8fe0"/></linearGradient><linearGradient id="db3" x1="0" y1="0" x2="1" y2="1"><stop offset="0" stop-color="#eeeefc"/><stop offset="1" stop-color="#9b98b8"/></linearGradient></defs><path d="M1 1.6 Q9 0.2 18 1.4 V19.6 Q12 21.8 5.4 21.6 L0.6 18.2 Z" fill="url(#db1)"/><path d="M1.6 2.4 Q9 1.2 17 2.2 V6 Q9 7.4 1.4 6.4 Z" fill="url(#db3)"/><path d="M1 6.6 Q9 8 18 6.2 V16.4 Q9 18 0.8 16.4 Z" fill="url(#db2)"/><path d="M2 9.2 H4 M2 12 H4 M2 14.6 H4" stroke="#e4eefb" stroke-width="1.1"/><path d="M6 9.4 Q11 10 17 9 M6 12.3 Q11 12.9 17 11.9" stroke="#8fb4e6" stroke-width="0.9" fill="none"/></svg>
<svg style="left:0;top:0" width="330" height="1378" viewBox="0 0 330 1378"><defs><radialGradient id="uh" cx="0.35" cy="0.3" r="0.8"><stop offset="0" stop-color="#e6edfd"/><stop offset="0.55" stop-color="#a9b0e6"/><stop offset="1" stop-color="#6e76c4"/></radialGradient><radialGradient id="ub" cx="0.5" cy="0.45" r="0.65"><stop offset="0" stop-color="#eceefc"/><stop offset="0.6" stop-color="#b4b7ea"/><stop offset="1" stop-color="#6d70c2"/></radialGradient><radialGradient id="ur" cx="0.4" cy="0.5" r="0.7"><stop offset="0" stop-color="#ff3208"/><stop offset="1" stop-color="#cf3a24"/></radialGradient></defs><circle cx="309.2" cy="1360" r="5.2" fill="url(#ur)"/><path d="M304.6 1376 Q304.2 1369.4 308.6 1367.6 L316.6 1367.6 Q320 1369.6 319.6 1376 Q312 1378.2 304.6 1376 Z" fill="url(#ub)"/><path d="M309.4 1366 H315.4 L312.6 1369.6 Z" fill="#eda04a"/><circle cx="312.7" cy="1362.3" r="4.9" fill="url(#uh)"/></svg>
<svg style="left:600px;top:1350px" width="32" height="28" viewBox="600 1350 32 28"><defs><linearGradient id="pl" x1="0" y1="0" x2="1" y2="1"><stop offset="0" stop-color="#c6c8ee"/><stop offset="0.5" stop-color="#8f92d2"/><stop offset="1" stop-color="#6468b8"/></linearGradient></defs><path d="M619.6 1353.6 Q622.4 1354.4 623 1357.4 L626.6 1362.2" fill="none" stroke="#555" stroke-width="0.9"/><path d="M607.4 1363 Q608.2 1358.6 612.4 1357 H619.4 Q623.4 1358.4 627 1362 V1372.4 L622.6 1373 L620.6 1366.6 L615.4 1366 L612.6 1372 L608 1372.6 Z" fill="url(#pl)"/><path d="M612.8 1364 L609.2 1374.2 M621.8 1367.4 L618.8 1376" stroke="#3a2c10" stroke-width="3.6" stroke-linecap="round"/><path d="M612.8 1364 L609.2 1374.2 M621.8 1367.4 L618.8 1376" stroke="#f3c02a" stroke-width="1.9" stroke-linecap="round"/><path d="M613 1364 L611.6 1368" stroke="#fbf08a" stroke-width="1.5" stroke-linecap="round"/></svg>
<span class="t f0" style="left:31.50px;top:4.00px;transform:scaleX(0.9700);">Скарб</span>
<span class="t f0" style="left:85.20px;top:4.00px;transform:scaleX(1.0498);">pro</span>
<span class="t f0" style="left:117.50px;top:4.00px;transform:scaleX(1.0717);">v.</span>
<span class="t f0" style="left:137.00px;top:4.00px;transform:scaleX(0.9267);">4.0.0.2</span>
<span class="t f0" style="left:194.63px;top:4.00px;transform:scaleX(0.9685);">[ІД:</span>
<span class="t f0" style="left:256.73px;top:4.00px;transform:scaleX(0.4667);">|</span>
<span class="t f0" style="left:265.75px;top:4.00px;transform:scaleX(0.9167);">-</span>
<span class="t f0" style="left:277.05px;top:4.00px;transform:scaleX(0.9480);">[Апт</span>
<span class="t f0" style="left:315.27px;top:4.00px;transform:scaleX(0.9828);">№003</span>
<span class="t f0" style="left:371.25px;top:4.00px;transform:scaleX(0.9816);">смт.Баришівка,</span>
<span class="t f0" style="left:498.28px;top:4.00px;transform:scaleX(0.9668);">вул.Київський</span>
<span class="t f0" style="left:615.34px;top:4.00px;transform:scaleX(0.9130);">шлях,126а]</span>
<span class="t f0" style="left:709.50px;top:4.00px;transform:scaleX(0.9167);">-</span>
<span class="t f0" style="left:720.81px;top:4.00px;transform:scaleX(0.9921);">[Штрих-коди</span>
<span class="t f0" style="left:831.25px;top:4.00px;transform:scaleX(0.9962);">товарів]</span>
<span class="t f1" style="left:45.00px;top:34.30px;transform:scaleX(0.9504);">Довідник</span>
<span class="t f1" style="left:140.84px;top:34.30px;transform:scaleX(0.9079);">Вихід</span>
<span class="t f1" style="left:204.07px;top:34.30px;transform:scaleX(0.9329);">Каса</span>
<span class="t f1" style="left:262.50px;top:34.30px;transform:scaleX(0.9641);">Документи</span>
<span class="t f1" style="left:374.78px;top:34.30px;transform:scaleX(0.9679);">Платежі</span>
<span class="t f1" style="left:462.23px;top:34.30px;transform:scaleX(1.0164);">Залишки</span>
<span class="t f1" style="left:560.25px;top:34.30px;transform:scaleX(0.9978);">Замовлення</span>
<span class="t f1" style="left:684.50px;top:34.30px;transform:scaleX(0.9404);">Сертифікати</span>
<span class="t f1" style="left:808.75px;top:34.30px;transform:scaleX(0.9404);">Склад</span>
<span class="t f1" style="left:879.25px;top:34.30px;transform:scaleX(0.9532);">Філії</span>
<span class="t f1" style="left:936.54px;top:34.30px;transform:scaleX(0.9625);">Звіти</span>
<span class="t f1" style="left:1000.75px;top:34.30px;transform:scaleX(0.9555);">Довідники</span>
<span class="t f1" style="left:1107.50px;top:34.30px;transform:scaleX(0.9776);">eHealth</span>
<span class="t f1" style="left:1189.02px;top:34.30px;transform:scaleX(0.9771);">Налаштування</span>
<span class="t f1" style="left:1332.78px;top:34.30px;transform:scaleX(0.9663);">Вікна</span>
<span class="t f1" style="left:1397.50px;top:34.30px;transform:scaleX(0.9386);">Довідка</span>
<span class="t f2" style="left:7.28px;top:64.60px;transform:scaleX(1.0399);">Штрих-коди</span>
<span class="t f2" style="left:303.50px;top:64.60px;transform:scaleX(1.0452);">товарів</span>
<span class="t f3" style="left:36.16px;top:128.60px;transform:scaleX(1.0407);">Поиск (Tab)</span>
<span class="t f1" style="left:46.30px;top:162.90px;transform:scaleX(0.9586);">Додати</span>
<span class="t f1" style="left:147.84px;top:162.90px;transform:scaleX(0.9604);">Редагувати</span>
<span class="t f1" style="left:282.60px;top:162.90px;">Видалити</span>
<span class="t f1" style="left:370.30px;top:162.90px;transform:scaleX(0.9955);">рядок</span>
<span class="t f1" style="left:462.20px;top:162.90px;transform:scaleX(0.9659);">Фільтр</span>
<span class="t f1" style="left:558.25px;top:162.90px;transform:scaleX(0.9499);">Загальний</span>
<span class="t f1" style="left:652.00px;top:162.90px;transform:scaleX(0.9747);">експорт</span>
<span class="t f1" style="left:760.30px;top:162.90px;transform:scaleX(0.9525);">Друк</span>
<span class="t f1" style="left:2061.20px;top:163.30px;transform:scaleX(0.9954);">Оновити</span>
<span class="t f4" style="left:11.50px;top:209.50px;transform:scaleX(0.9957);">Перетягніть</span>
<span class="t f4" style="left:131.70px;top:209.50px;transform:scaleX(1.0090);">заголовок</span>
<span class="t f4" style="left:234.82px;top:209.50px;transform:scaleX(0.9840);">колонки</span>
<span class="t f4" style="left:320.80px;top:209.50px;transform:scaleX(0.9851);">сюди</span>
<span class="t f4" style="left:376.70px;top:209.50px;transform:scaleX(0.9751);">для</span>
<span class="t f4" style="left:419.20px;top:209.50px;transform:scaleX(1.0054);">угруповання</span>
<span class="t f4" style="left:546.30px;top:209.50px;transform:scaleX(0.8778);">з</span>
<span class="t f4" style="left:560.69px;top:209.50px;transform:scaleX(1.0105);">цього</span>
<span class="t f4" style="left:624.20px;top:209.50px;transform:scaleX(1.0292);">стовпцю</span>
<span class="t f5" style="left:87.79px;top:252.80px;transform:scaleX(1.2077);">ІД</span>
<span class="t f5" style="left:402.30px;top:252.80px;transform:scaleX(0.9956);">Товар</span>
<span class="t f5" style="left:743.41px;top:252.80px;transform:scaleX(0.9875);">Виробник</span>
<span class="t f5" style="left:938.48px;top:252.80px;transform:scaleX(1.0164);">Штрих код</span>
<span class="t f5" style="left:1076.46px;top:252.80px;transform:scaleX(1.0418);">Не використо…</span>
<span class="t f5" style="left:1212.18px;top:252.80px;transform:scaleX(1.0219);">Використовувати за замов…</span>
<span class="t f5" style="left:1442.20px;top:252.80px;transform:scaleX(1.0589);">Дата створе…</span>
<span class="t f5" style="left:1566.00px;top:252.80px;transform:scaleX(1.0154);">Автор</span>
<span class="t f5" style="left:1632.39px;top:252.80px;transform:scaleX(1.0101);">Коментар</span>
<span class="t f6" style="left:124.59px;top:279.00px;transform:scaleX(1.0149);">20801</span>
<span class="t f6" style="left:184.20px;top:279.00px;transform:scaleX(1.0221);">Содерм р-р 0,1% 15мл</span>
<span class="t f6" style="left:669.60px;top:279.00px;transform:scaleX(1.0040);">Германия</span>
<span class="t f6" style="left:898.80px;top:279.00px;transform:scaleX(1.0115);">4250297400878</span>
<span class="t f6" style="left:1442.20px;top:279.00px;transform:scaleX(0.9654);">03.05.2020</span>
<span class="t f6" style="left:1538.48px;top:279.00px;transform:scaleX(0.8212);">...</span>
<span class="t f6" style="left:124.59px;top:306.00px;transform:scaleX(1.0149);">20802</span>
<span class="t f6" style="left:184.20px;top:306.00px;transform:scaleX(1.0082);">Солекс табл. 200 мг блистер № 30</span>
<span class="t f6" style="left:669.62px;top:306.00px;transform:scaleX(0.9774);">Ривофарм СА</span>
<span class="t f6" style="left:897.78px;top:306.00px;transform:scaleX(1.0191);">7612619000017</span>
<span class="t f6" style="left:1442.20px;top:306.00px;transform:scaleX(0.9654);">03.05.2020</span>
<span class="t f6" style="left:1538.48px;top:306.00px;transform:scaleX(0.8212);">...</span>
<span class="t f6" style="left:124.59px;top:333.00px;transform:scaleX(1.0149);">20803</span>
<span class="t f6" style="left:184.20px;top:333.00px;transform:scaleX(1.0195);">Солерон 100 таб.100мг №30</span>
<span class="t f6" style="left:670.60px;top:333.00px;transform:scaleX(1.0153);">Фармастарт</span>
<span class="t f6" style="left:898.80px;top:333.00px;transform:scaleX(1.0115);">4823045201692</span>
<span class="t f6" style="left:1442.20px;top:333.00px;transform:scaleX(0.9654);">03.05.2020</span>
<span class="t f6" style="left:1538.48px;top:333.00px;transform:scaleX(0.8212);">...</span>
<span class="t f6" style="left:124.59px;top:360.00px;transform:scaleX(1.0149);">20804</span>
<span class="t f6" style="left:184.20px;top:360.00px;transform:scaleX(1.0236);">Драмина табл. 50мг №10</span>
<span class="t f6" style="left:671.66px;top:360.00px;transform:scaleX(1.0613);">Jadran</span>
<span class="t f6" style="left:897.78px;top:360.00px;transform:scaleX(1.0191);">3858881052703</span>
<span class="t f6" style="left:1442.20px;top:360.00px;transform:scaleX(0.9654);">03.05.2020</span>
<span class="t f6" style="left:1538.48px;top:360.00px;transform:scaleX(0.8212);">...</span>
<span class="t f6" style="left:124.59px;top:387.00px;transform:scaleX(1.0149);">20805</span>
<span class="t f6" style="left:184.20px;top:387.00px;transform:scaleX(1.0223);">Драмина табл. 50мг №5</span>
<span class="t f6" style="left:671.66px;top:387.00px;transform:scaleX(1.0613);">Jadran</span>
<span class="t f6" style="left:897.78px;top:387.00px;transform:scaleX(1.0191);">3858881052697</span>
<span class="t f6" style="left:1442.20px;top:387.00px;transform:scaleX(0.9654);">03.05.2020</span>
<span class="t f6" style="left:1538.48px;top:387.00px;transform:scaleX(0.8212);">...</span>
<span class="t f6" style="left:124.59px;top:414.00px;transform:scaleX(1.0149);">20806</span>
<span class="t f6" style="left:183.19px;top:414.00px;transform:scaleX(1.0149);">Подорожника  лист 50 г пачка</span>
<span class="t f6" style="left:670.60px;top:414.00px;transform:scaleX(1.0364);">Лектравы ЗАО</span>
<span class="t f6" style="left:898.80px;top:414.00px;transform:scaleX(1.0115);">4823012800088</span>
<span class="t f6" style="left:1442.20px;top:414.00px;transform:scaleX(0.9654);">03.05.2020</span>
<span class="t f6" style="left:1538.48px;top:414.00px;transform:scaleX(0.8212);">...</span>
<span class="t f6" style="left:124.59px;top:441.00px;transform:scaleX(1.0149);">20807</span>
<span class="t f6" style="left:183.18px;top:441.00px;transform:scaleX(1.0190);">Подорожника лист 50г</span>
<span class="t f6" style="left:670.60px;top:441.00px;transform:scaleX(1.0364);">Лектравы ЗАО</span>
<span class="t f6" style="left:898.80px;top:441.00px;transform:scaleX(1.0115);">4823012800088</span>
<span class="t f6" style="left:1442.20px;top:441.00px;transform:scaleX(0.9654);">03.05.2020</span>
<span class="t f6" style="left:1538.48px;top:441.00px;transform:scaleX(0.8212);">...</span>
<span class="t f6" style="left:124.59px;top:468.00px;transform:scaleX(1.0149);">20808</span>
<span class="t f6" style="left:183.20px;top:468.00px;">Подорожника сироп от кашля Др.Тайсс 100мл</span>
<span class="t f6" style="left:669.60px;top:468.00px;transform:scaleX(1.0046);">Naturwaren</span>
<span class="t f6" style="left:898.80px;top:468.00px;transform:scaleX(1.0115);">4016369691120</span>
<span class="t f6" style="left:1442.20px;top:468.00px;transform:scaleX(0.9654);">03.05.2020</span>
<span class="t f6" style="left:1538.48px;top:468.00px;transform:scaleX(0.8212);">...</span>
<span class="t f6" style="left:124.59px;top:495.00px;transform:scaleX(1.0149);">20809</span>
<span class="t f6" style="left:183.20px;top:495.00px;">Подорожника сироп от кашля Др.Тайсс 250мл</span>
<span class="t f6" style="left:669.60px;top:495.00px;transform:scaleX(1.0046);">Naturwaren</span>
<span class="t f6" style="left:898.80px;top:495.00px;transform:scaleX(1.0115);">4016369692127</span>
<span class="t f6" style="left:1442.20px;top:495.00px;transform:scaleX(0.9654);">03.05.2020</span>
<span class="t f6" style="left:1538.48px;top:495.00px;transform:scaleX(0.8212);">...</span>
<span class="t f6" style="left:124.59px;top:522.00px;transform:scaleX(1.0149);">20810</span>
<span class="t f6" style="left:183.18px;top:522.00px;transform:scaleX(1.0157);">Подорожника сок 100мл</span>
<span class="t f6" style="left:670.60px;top:522.00px;transform:scaleX(0.9974);">Лубныфарм ОАО</span>
<span class="t f6" style="left:898.80px;top:522.00px;transform:scaleX(1.0115);">4820007352515</span>
<span class="t f6" style="left:1442.20px;top:522.00px;transform:scaleX(0.9654);">03.05.2020</span>
<span class="t f6" style="left:1538.48px;top:522.00px;transform:scaleX(0.8212);">...</span>
<span class="t f6" style="left:124.59px;top:549.00px;transform:scaleX(1.0149);">20811</span>
<span class="t f6" style="left:184.20px;top:549.00px;transform:scaleX(1.0153);">Оксилитен табл. п/о 20 мг № 10</span>
<span class="t f6" style="left:670.60px;top:549.00px;transform:scaleX(0.9934);">Anfarm Hellas</span>
<span class="t f6" style="left:897.78px;top:549.00px;transform:scaleX(1.0191);">7640161220089</span>
<span class="t f6" style="left:1442.20px;top:549.00px;transform:scaleX(0.9654);">03.05.2020</span>
<span class="t f6" style="left:1538.48px;top:549.00px;transform:scaleX(0.8212);">...</span>
<span class="t f6" style="left:124.59px;top:576.00px;transform:scaleX(1.0149);">20812</span>
<span class="t f6" style="left:184.20px;top:576.00px;transform:scaleX(1.0195);">Солерон 200 таб.200мг №30</span>
<span class="t f6" style="left:670.60px;top:576.00px;transform:scaleX(1.0153);">Фармастарт</span>
<span class="t f6" style="left:898.80px;top:576.00px;transform:scaleX(1.0115);">4823045201722</span>
<span class="t f6" style="left:1442.20px;top:576.00px;transform:scaleX(0.9654);">03.05.2020</span>
<span class="t f6" style="left:1538.48px;top:576.00px;transform:scaleX(0.8212);">...</span>
<span class="t f6" style="left:124.59px;top:603.00px;transform:scaleX(1.0149);">20813</span>
<span class="t f6" style="left:184.20px;top:603.00px;transform:scaleX(1.0227);">Солерон 200 таб.200мг №60 (10х6)</span>
<span class="t f6" style="left:670.60px;top:603.00px;transform:scaleX(1.0153);">Фармастарт</span>
<span class="t f6" style="left:898.80px;top:603.00px;transform:scaleX(1.0115);">4823045203443</span>
<span class="t f6" style="left:1442.20px;top:603.00px;transform:scaleX(0.9654);">03.05.2020</span>
<span class="t f6" style="left:1538.48px;top:603.00px;transform:scaleX(0.8212);">...</span>
<span class="t f6" style="left:124.59px;top:630.00px;transform:scaleX(1.0149);">20814</span>
<span class="t f6" style="left:184.20px;top:630.00px;transform:scaleX(1.0091);">Солиан табл. 200мг №30</span>
<span class="t f6" style="left:669.58px;top:630.00px;transform:scaleX(1.0204);">Synthelabo</span>
<span class="t f6" style="left:897.78px;top:630.00px;transform:scaleX(1.0191);">3582910051879</span>
<span class="t f6" style="left:1442.20px;top:630.00px;transform:scaleX(0.9654);">03.05.2020</span>
<span class="t f6" style="left:1538.48px;top:630.00px;transform:scaleX(0.8212);">...</span>
<span class="t f6" style="left:124.59px;top:657.00px;transform:scaleX(1.0149);">20815</span>
<span class="t f6" style="left:183.19px;top:657.00px;transform:scaleX(1.0057);">Повязка пласт. H.Pore Dr.House 10 см * 10 см стер. н/...</span>
<span class="t f6" style="left:671.60px;top:657.00px;">Jiangsu Hongbao Group</span>
<span class="t f6" style="left:897.78px;top:657.00px;transform:scaleX(1.0191);">5060384392264</span>
<span class="t f6" style="left:1442.20px;top:657.00px;transform:scaleX(0.9654);">03.05.2020</span>
<span class="t f6" style="left:1538.48px;top:657.00px;transform:scaleX(0.8212);">...</span>
<span class="t f6" style="left:124.59px;top:684.00px;transform:scaleX(1.0149);">20816</span>
<span class="t f6" style="left:183.19px;top:684.00px;transform:scaleX(1.0057);">Повязка пласт. H.Pore Dr.House 10 см * 15 см стер. н/...</span>
<span class="t f6" style="left:671.60px;top:684.00px;">Jiangsu Hongbao Group</span>
<span class="t f6" style="left:897.78px;top:684.00px;transform:scaleX(1.0191);">5060384392271</span>
<span class="t f6" style="left:1442.20px;top:684.00px;transform:scaleX(0.9654);">03.05.2020</span>
<span class="t f6" style="left:1538.48px;top:684.00px;transform:scaleX(0.8212);">...</span>
<span class="t f6" style="left:124.59px;top:711.00px;transform:scaleX(1.0149);">20817</span>
<span class="t f6" style="left:183.19px;top:711.00px;transform:scaleX(1.0057);">Повязка пласт. H.Pore Dr.House 10 см * 25 см стер. н/...</span>
<span class="t f6" style="left:671.60px;top:711.00px;">Jiangsu Hongbao Group</span>
<span class="t f6" style="left:897.78px;top:711.00px;transform:scaleX(1.0191);">5060384392295</span>
<span class="t f6" style="left:1442.20px;top:711.00px;transform:scaleX(0.9654);">03.05.2020</span>
<span class="t f6" style="left:1538.48px;top:711.00px;transform:scaleX(0.8212);">...</span>
<span class="t f6" style="left:124.59px;top:738.00px;transform:scaleX(1.0149);">20818</span>
<span class="t f6" style="left:184.20px;top:738.00px;transform:scaleX(1.0021);">Солидаго Композитум С р-р д/ин. амп. 2,2мл №5</span>
<span class="t f6" style="left:669.55px;top:738.00px;transform:scaleX(1.0545);">Heel</span>
<span class="t f6" style="left:898.80px;top:738.00px;transform:scaleX(1.0115);">4047642001381</span>
<span class="t f6" style="left:1442.20px;top:738.00px;transform:scaleX(0.9654);">03.05.2020</span>
<span class="t f6" style="left:1538.48px;top:738.00px;transform:scaleX(0.8212);">...</span>
<span class="t f6" style="left:124.59px;top:765.00px;transform:scaleX(1.0149);">20819</span>
<span class="t f6" style="left:184.20px;top:765.00px;transform:scaleX(0.9880);">Солидагорен р-р орал. 0,79 мл/мл фл. 20 мл</span>
<span class="t f6" style="left:669.60px;top:765.00px;">Dr. Gustav Klein</span>
<span class="t f6" style="left:898.80px;top:765.00px;transform:scaleX(1.0115);">4260019330505</span>
<span class="t f6" style="left:1442.20px;top:765.00px;transform:scaleX(0.9654);">03.05.2020</span>
<span class="t f6" style="left:1538.48px;top:765.00px;transform:scaleX(0.8212);">...</span>
<span class="t f6" style="left:124.59px;top:792.00px;transform:scaleX(1.0149);">20820</span>
<span class="t f6" style="left:184.20px;top:792.00px;transform:scaleX(0.9880);">Солидагорен р-р орал. 0,79 мл/мл фл. 50 мл</span>
<span class="t f6" style="left:669.60px;top:792.00px;">Dr. Gustav Klein</span>
<span class="t f6" style="left:898.80px;top:792.00px;transform:scaleX(1.0115);">4260019330512</span>
<span class="t f6" style="left:1442.20px;top:792.00px;transform:scaleX(0.9654);">03.05.2020</span>
<span class="t f6" style="left:1538.48px;top:792.00px;transform:scaleX(0.8212);">...</span>
<span class="t f6" style="left:124.59px;top:819.00px;transform:scaleX(1.0149);">20821</span>
<span class="t f6" style="left:184.20px;top:819.00px;transform:scaleX(0.9966);">Солизим табл. 20000ле №20</span>
<span class="t f6" style="left:669.60px;top:819.00px;transform:scaleX(0.9971);">Витамины ОАО</span>
<span class="t f6" style="left:898.80px;top:819.00px;transform:scaleX(1.0115);">4823008902352</span>
<span class="t f6" style="left:1442.20px;top:819.00px;transform:scaleX(0.9654);">03.05.2020</span>
<span class="t f6" style="left:1538.48px;top:819.00px;transform:scaleX(0.8212);">...</span>
<span class="t f6" style="left:124.59px;top:846.00px;transform:scaleX(1.0149);">20822</span>
<span class="t f6" style="left:184.20px;top:846.00px;transform:scaleX(1.0046);">Солизим форте табл. 30000ед №20</span>
<span class="t f6" style="left:670.60px;top:846.00px;transform:scaleX(1.0197);">Технолог ЗАО</span>
<span class="t f6" style="left:898.80px;top:846.00px;transform:scaleX(1.0115);">4820022241139</span>
<span class="t f6" style="left:1442.20px;top:846.00px;transform:scaleX(0.9654);">03.05.2020</span>
<span class="t f6" style="left:1538.48px;top:846.00px;transform:scaleX(0.8212);">...</span>
<span class="t f6" style="left:124.59px;top:873.00px;transform:scaleX(1.0149);">20823</span>
<span class="t f6" style="left:184.20px;top:873.00px;transform:scaleX(1.0295);">Дриптан табл. 5мг №30</span>
<span class="t f6" style="left:669.62px;top:873.00px;transform:scaleX(0.9786);">Lab. Fournier</span>
<span class="t f6" style="left:898.80px;top:873.00px;transform:scaleX(1.0115);">8002660012586</span>
<span class="t f6" style="left:1442.20px;top:873.00px;transform:scaleX(0.9654);">03.05.2020</span>
<span class="t f6" style="left:1538.48px;top:873.00px;transform:scaleX(0.8212);">...</span>
<span class="t f6" style="left:124.59px;top:900.00px;transform:scaleX(1.0149);">20824</span>
<span class="t f6" style="left:184.20px;top:900.00px;transform:scaleX(0.9904);">Дроплекс кап. уш. 15мл</span>
<span class="t f6" style="left:670.60px;top:900.00px;transform:scaleX(0.9886);">World Medicine</span>
<span class="t f6" style="left:897.78px;top:900.00px;transform:scaleX(1.0191);">5944728001640</span>
<span class="t f6" style="left:1442.20px;top:900.00px;transform:scaleX(0.9654);">03.05.2020</span>
<span class="t f6" style="left:1538.48px;top:900.00px;transform:scaleX(0.8212);">...</span>
<span class="t f6" style="left:124.59px;top:927.00px;transform:scaleX(1.0149);">20825</span>
<span class="t f6" style="left:183.20px;top:927.00px;">Катетер Фолея 2 ход. СН20 ИГАР</span>
<span class="t f6" style="left:670.60px;top:927.00px;transform:scaleX(1.0182);">Wenzhou</span>
<span class="t f6" style="left:898.80px;top:927.00px;transform:scaleX(1.0115);">4820017604321</span>
<span class="t f6" style="left:1442.20px;top:927.00px;transform:scaleX(0.9654);">03.05.2020</span>
<span class="t f6" style="left:1538.48px;top:927.00px;transform:scaleX(0.8212);">...</span>
<span class="t f6" style="left:124.59px;top:954.00px;transform:scaleX(1.0149);">20826</span>
<span class="t f6" style="left:184.20px;top:954.00px;">Солизим форте табл. №20</span>
<span class="t f6" style="left:670.60px;top:954.00px;transform:scaleX(1.0197);">Технолог ЗАО</span>
<span class="t f6" style="left:898.80px;top:954.00px;transform:scaleX(1.0115);">4820022241139</span>
<span class="t f6" style="left:1442.20px;top:954.00px;transform:scaleX(0.9654);">03.05.2020</span>
<span class="t f6" style="left:1538.48px;top:954.00px;transform:scaleX(0.8212);">...</span>
<span class="t f6" style="left:124.59px;top:981.00px;transform:scaleX(1.0149);">20827</span>
<span class="t f6" style="left:184.20px;top:981.00px;transform:scaleX(0.9932);">Солковагин р-р фл. 0,5мл №2</span>
<span class="t f6" style="left:669.60px;top:981.00px;transform:scaleX(0.9971);">ICN Switzerland</span>
<span class="t f6" style="left:898.80px;top:981.00px;transform:scaleX(1.0115);">4019338603209</span>
<span class="t f6" style="left:1442.20px;top:981.00px;transform:scaleX(0.9654);">03.05.2020</span>
<span class="t f6" style="left:1538.48px;top:981.00px;transform:scaleX(0.8212);">...</span>
<span class="t f6" style="left:124.59px;top:1008.00px;transform:scaleX(1.0149);">20828</span>
<span class="t f6" style="left:184.20px;top:1008.00px;transform:scaleX(1.0289);">Л/пласт АЛПЕ телесный разные размеры №18</span>
<span class="t f6" style="left:669.59px;top:1008.00px;transform:scaleX(1.0089);">Planet Medical</span>
<span class="t f6" style="left:897.78px;top:1008.00px;transform:scaleX(1.0191);">7640158260982</span>
<span class="t f6" style="left:1442.20px;top:1008.00px;transform:scaleX(0.9654);">03.05.2020</span>
<span class="t f6" style="left:1538.48px;top:1008.00px;transform:scaleX(0.8212);">...</span>
<span class="t f6" style="left:124.59px;top:1035.00px;transform:scaleX(1.0149);">20829</span>
<span class="t f6" style="left:183.20px;top:1035.00px;transform:scaleX(1.0040);">Катетер Фолея 2 ход. СН 10</span>
<span class="t f6" style="left:670.60px;top:1035.00px;transform:scaleX(1.0233);">Troge Medical</span>
<span class="t f6" style="left:897.78px;top:1035.00px;transform:scaleX(1.0191);">2000000348018</span>
<span class="t f6" style="left:1442.20px;top:1035.00px;transform:scaleX(0.9654);">03.05.2020</span>
<span class="t f6" style="left:1538.48px;top:1035.00px;transform:scaleX(0.8212);">...</span>
<span class="t f6" style="left:124.59px;top:1062.00px;transform:scaleX(1.0149);">20830</span>
<span class="t f6" style="left:184.20px;top:1062.00px;transform:scaleX(0.9794);">Л/пласт АЛПЕ Фемили Ролфикс бумаж.(12,5мм х 4,5м...</span>
<span class="t f6" style="left:669.59px;top:1062.00px;transform:scaleX(1.0089);">Planet Medical</span>
<span class="t f6" style="left:897.78px;top:1062.00px;transform:scaleX(1.0191);">7640158262139</span>
<span class="t f6" style="left:1442.20px;top:1062.00px;transform:scaleX(0.9654);">03.05.2020</span>
<span class="t f6" style="left:1538.48px;top:1062.00px;transform:scaleX(0.8212);">...</span>
<span class="t f6" style="left:124.59px;top:1089.00px;transform:scaleX(1.0149);">20831</span>
<span class="t f6" style="left:184.20px;top:1089.00px;transform:scaleX(0.9799);">Л/пласт АЛПЕ Фемили Ролфикс бумаж.(25мм х 4,5м) ...</span>
<span class="t f6" style="left:669.59px;top:1089.00px;transform:scaleX(1.0089);">Planet Medical</span>
<span class="t f6" style="left:897.78px;top:1089.00px;transform:scaleX(1.0191);">7640158262160</span>
<span class="t f6" style="left:1442.20px;top:1089.00px;transform:scaleX(0.9654);">03.05.2020</span>
<span class="t f6" style="left:1538.48px;top:1089.00px;transform:scaleX(0.8212);">...</span>
<span class="t f6" style="left:124.59px;top:1116.00px;transform:scaleX(1.0149);">20832</span>
<span class="t f6" style="left:184.20px;top:1116.00px;transform:scaleX(0.9783);">Л/пласт АЛПЕ Фемили Ролфикс ткан. (12,5мм х 4,5м) ...</span>
<span class="t f6" style="left:669.59px;top:1116.00px;transform:scaleX(1.0089);">Planet Medical</span>
<span class="t f6" style="left:897.78px;top:1116.00px;transform:scaleX(1.0191);">7640158262177</span>
<span class="t f6" style="left:1442.20px;top:1116.00px;transform:scaleX(0.9654);">03.05.2020</span>
<span class="t f6" style="left:1538.48px;top:1116.00px;transform:scaleX(0.8212);">...</span>
<span class="t f6" style="left:124.59px;top:1143.00px;transform:scaleX(1.0149);">20833</span>
<span class="t f6" style="left:184.20px;top:1143.00px;transform:scaleX(0.9933);">Л/пласт АЛПЕ Фемили Эконом классич. мягкий №300</span>
<span class="t f6" style="left:669.59px;top:1143.00px;transform:scaleX(1.0089);">Planet Medical</span>
<span class="t f6" style="left:897.78px;top:1143.00px;transform:scaleX(1.0191);">7640158262191</span>
<span class="t f6" style="left:1442.20px;top:1143.00px;transform:scaleX(0.9654);">03.05.2020</span>
<span class="t f6" style="left:1538.48px;top:1143.00px;transform:scaleX(0.8212);">...</span>
<span class="t f6" style="left:124.59px;top:1170.00px;transform:scaleX(1.0149);">20834</span>
<span class="t f6" style="left:183.18px;top:1170.00px;transform:scaleX(1.0242);">Метронидазол супп. ваг. 0,1г №10</span>
<span class="t f6" style="left:669.59px;top:1170.00px;transform:scaleX(1.0086);">Монфарм</span>
<span class="t f6" style="left:898.80px;top:1170.00px;transform:scaleX(1.0115);">4820013360405</span>
<span class="t f6" style="left:1442.20px;top:1170.00px;transform:scaleX(0.9654);">03.05.2020</span>
<span class="t f6" style="left:1538.48px;top:1170.00px;transform:scaleX(0.8212);">...</span>
<span class="t f6" style="left:124.59px;top:1197.00px;transform:scaleX(1.0149);">20835</span>
<span class="t f6" style="left:183.17px;top:1197.00px;transform:scaleX(1.0291);">Метронидазол табл. 250мг №10</span>
<span class="t f6" style="left:670.60px;top:1197.00px;transform:scaleX(0.9974);">Лубныфарм ОАО</span>
<span class="t f6" style="left:898.80px;top:1197.00px;transform:scaleX(1.0115);">4820007357749</span>
<span class="t f6" style="left:1442.20px;top:1197.00px;transform:scaleX(0.9654);">03.05.2020</span>
<span class="t f6" style="left:1538.48px;top:1197.00px;transform:scaleX(0.8212);">...</span>
<span class="t f6" style="left:124.59px;top:1224.00px;transform:scaleX(1.0149);">20836</span>
<span class="t f6" style="left:183.17px;top:1224.00px;transform:scaleX(1.0327);">Метфогамма 1000 табл. №120*</span>
<span class="t f6" style="left:670.60px;top:1224.00px;transform:scaleX(1.0161);">Woerwag Pharma</span>
<span class="t f6" style="left:898.80px;top:1224.00px;transform:scaleX(1.0115);">4030674010407</span>
<span class="t f6" style="left:1442.20px;top:1224.00px;transform:scaleX(0.9654);">03.05.2020</span>
<span class="t f6" style="left:1538.48px;top:1224.00px;transform:scaleX(0.8212);">...</span>
<span class="t f6" style="left:187.20px;top:1253.70px;transform:scaleX(0.9872);">Запис 1 із 17256</span>
<span class="t f7" style="left:29.57px;top:1284.20px;transform:scaleX(1.0273);">Показувати деталі</span>
<span class="t f7" style="left:8.41px;top:1315.30px;transform:scaleX(0.9854);">Головна</span>
<span class="t f7" style="left:197.56px;top:1315.30px;transform:scaleX(1.0374);">Штрих-коди товарів</span>
<span class="t f8" style="left:29.70px;top:1351.40px;transform:scaleX(0.8994);">База даних: TASA3@TITAN</span>
<span class="t f8" style="left:328.43px;top:1351.40px;transform:scaleX(0.8726);">Користувач: GIFT</span>
<span class="t f8" style="left:636.00px;top:1351.40px;transform:scaleX(0.7800);">4</span>
<span class="t f8" style="left:665.89px;top:1351.40px;transform:scaleX(0.9063);">Кассовый аппарат не подключен</span>
<span class="t f8" style="left:1123.50px;top:1351.40px;transform:scaleX(0.8873);">Зона: Склад [1]</span>
<svg style="left:0;top:0;pointer-events:none" width="2159" height="1378" viewBox="0 0 2159 1378"><path d="M489.81 192.72 L825.41 523.38 L824.79 524.02 L484.08 198.62 Z" fill="#fa0006" stroke="#d40000" stroke-width="0.4"/><path d="M481.2 190.1 L498.3 194.7 Q500.8 196.6 498.3 198.5 L493.4 198.3 L489.4 203.2 L489.8 206.5 Q487.6 209.6 485.3 207 Z" fill="#fa0006" stroke="#fa0006" stroke-width="0.6" stroke-linejoin="round"/></svg>
</body></html>
